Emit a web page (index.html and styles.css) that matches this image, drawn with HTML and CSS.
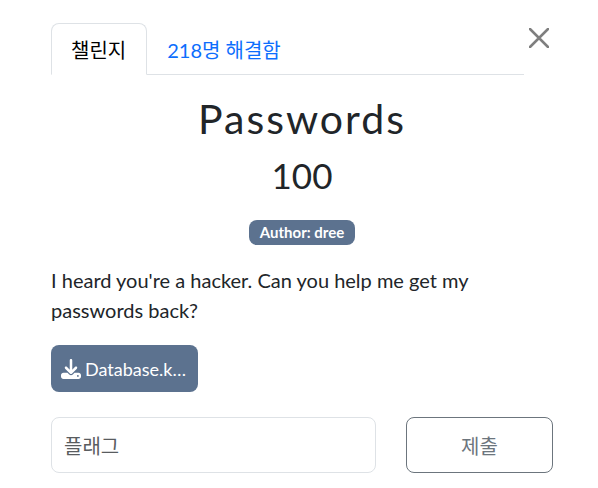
FILE: index.html
```html
<!DOCTYPE html>
<html lang="ko">
<head>
<meta charset="utf-8">
<meta name="viewport" content="width=device-width, initial-scale=1">
<title>Passwords</title>
<link rel="stylesheet" href="styles.css">
</head>
<body>
<main class="challenge">
  <header class="top">
    <nav class="tabs">
      <button class="tab tab-active" type="button">챌린지</button>
      <button class="tab" type="button">218명 해결함</button>
    </nav>
    <button class="close" type="button" aria-label="닫기">
      <svg viewBox="0 0 20 20" aria-hidden="true"><path d="M1 1L19 19M19 1L1 19"/></svg>
    </button>
  </header>
  <section class="content">
    <h1 class="name">Passwords</h1>
    <h2 class="value">100</h2>
    <div class="tags"><span class="badge">Author: dree</span></div>
    <p class="description">I heard you're a hacker. Can you help me get my passwords back?</p>
    <a class="file" href="#">
      <svg viewBox="0 0 512 512" aria-hidden="true"><path d="M288 32c0-17.700-14.300-32-32-32s-32 14.300-32 32v242.700l-73.400-73.400c-12.500-12.500-32.800-12.500-45.300 0s-12.500 32.800 0 45.300l128 128c12.500 12.500 32.800 12.500 45.300 0l128-128c12.500-12.500 12.500-32.800 0-45.300s-32.800-12.500-45.300 0L288 274.700V32zM64 352c-35.300 0-64 28.700-64 64v32c0 35.300 28.700 64 64 64h384c35.300 0 64-28.700 64-64v-32c0-35.300-28.700-64-64-64H346.500l-45.300 45.300c-25 25-65.500 25-90.500 0L165.500 352H64zm368 56a24 24 0 1 1 0 48 24 24 0 1 1 0-48z"/></svg>
      <span class="file-name">Database.k…</span>
    </a>
    <form class="answer">
      <input class="flag" type="text" placeholder="플래그" aria-label="플래그">
      <button class="submit" type="button">제출</button>
    </form>
  </section>
</main>
</body>
</html>
```
FILE: styles.css
```css
* {
  box-sizing: border-box;
}

body {
  margin: 0;
  background: #fff;
  color: #212529;
  font-family: Lato, "Noto Sans CJK KR", sans-serif;
  font-size: 20px;
  line-height: 30px;
}

button,
input {
  font: inherit;
}

.challenge {
  padding: 23px 45px 15px 51px;
}

.top {
  display: flex;
  align-items: flex-start;
}

.tabs {
  display: flex;
  flex: 1;
  border-bottom: 1px solid #dee2e6;
}

.tab {
  height: 52px;
  margin-bottom: -1px;
  padding: 2px 20px 0 19px;
  border: 1px solid transparent;
  border-radius: 8px 8px 0 0;
  background: none;
  color: #0d6efd;
}

.tab-active {
  border-color: #dee2e6 #dee2e6 #fff;
  background: #fff;
  color: #000;
}

.close {
  display: flex;
  padding: 5px 4px 5px 5px;
  border: 0;
  background: none;
}

.close svg {
  width: 20px;
  height: 20px;
  fill: none;
  stroke: #7f7f7f;
  stroke-width: 2.5;
  stroke-linecap: round;
}

.name,
.value {
  margin: 0;
  font-weight: 400;
  text-align: center;
}

.name {
  padding-top: 19px;
  font-size: 41px;
  line-height: 50px;
  letter-spacing: 2px;
}

.value {
  padding-top: 10px;
  font-size: 35px;
  line-height: 42px;
}

.tags {
  display: flex;
  justify-content: center;
  padding-top: 24px;
}

.badge {
  padding: 5px 11px;
  border-radius: 8px;
  background: #5c728f;
  color: #fff;
  font-size: 15px;
  font-weight: 700;
  line-height: 15px;
}

.description {
  margin: 20px 0;
}

.file {
  display: flex;
  align-items: center;
  gap: 4px;
  width: 147px;
  height: 47px;
  padding: 0 10px;
  border-radius: 8px;
  background: #5c728f;
  color: #fff;
  font-size: 18px;
  text-decoration: none;
}

.file svg {
  flex: none;
  width: 20px;
  height: 20px;
  fill: currentColor;
}

.file-name {
  white-space: nowrap;
}

.answer {
  display: flex;
  gap: 30px;
  margin-top: 25px;
}

.flag {
  flex: 1;
  min-width: 0;
  height: 56px;
  padding: 2px 12px 0;
  border: 1px solid #dee2e6;
  border-radius: 8px;
}

.flag::placeholder {
  color: #595c5f;
}

.submit {
  width: 147px;
  height: 56px;
  padding: 2px 0 0;
  border: 1px solid #6c757d;
  border-radius: 8px;
  background: #fff;
  color: #6c757d;
}
```
